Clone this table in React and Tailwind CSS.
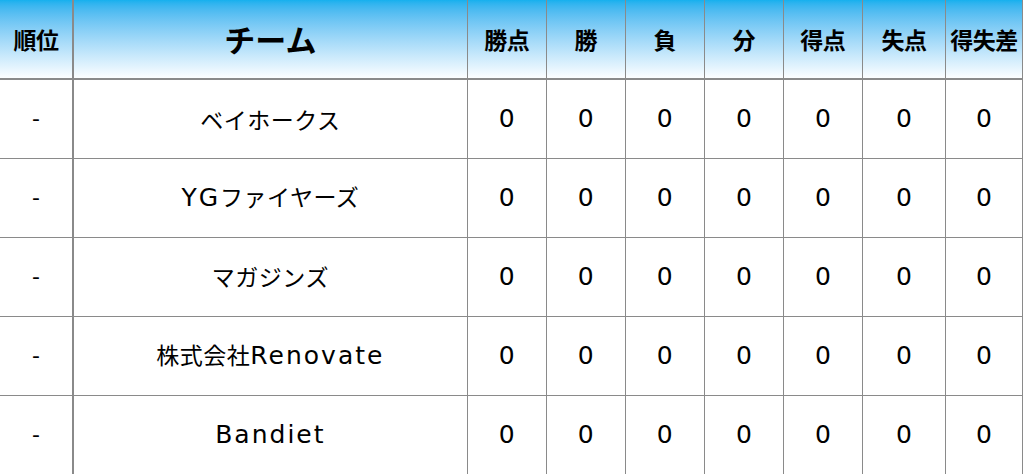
import React from "react";

const teams = [
  [["ベイホークス", "j"]],
  [["YG", "l"], ["ファイヤーズ", "j"]],
  [["マガジンズ", "j"]],
  [["株式会社", "j"], ["Renovate", "l"]],
  [["Bandiet", "l"]],
];
const heads = ["勝点", "勝", "負", "分", "得点", "失点", "得失差"];
const widths = ["w-[79px]", "w-[79px]", "w-[79px]", "w-[79px]", "w-[79px]", "w-[83px]", "w-[77px]"];

const jp = '"Noto Sans CJK JP", sans-serif';
const lat = '"DejaVu Sans", "Noto Sans CJK JP", sans-serif';

export default function App() {
  return (
    <div className="w-[1024px] h-[474px] bg-white overflow-hidden" style={{ fontFamily: jp }}>
      <table className="border-collapse table-fixed w-[1023px] text-black">
        <thead>
          <tr className="h-[79px] bg-gradient-to-b from-[#14b0ee] to-[#ffffff]">
            <th className="w-[73px] border-r-2 border-b-2 border-[#8a8a8a] text-[23px] font-bold p-0 tracking-[-0.5px]">順位</th>
            <th className="w-[394px] border-r border-b-2 border-[#8a8a8a] text-[31px] font-bold p-0">チーム</th>
            {heads.map((h, i) => (
              <th key={h} className={`${widths[i]} border-r border-b-2 border-[#8a8a8a] text-[23px] font-bold p-0 whitespace-nowrap tracking-[-0.5px]`}>{h}</th>
            ))}
          </tr>
        </thead>
        <tbody>
          {teams.map((t, idx) => (
            <tr key={idx} className="h-[79px]">
              <td className="border-r-2 border-b border-[#8a8a8a] text-center text-[22px] p-0" style={{ fontFamily: lat }}>-</td>
              <td className="border-r border-b border-[#8a8a8a] text-center p-0 whitespace-nowrap">
                {t.map(([s, k]) =>
                  k === "j" ? (
                    <span key={s} className="text-[23px] tracking-[0.5px]">{s}</span>
                  ) : (
                    <span key={s} className="text-[25px] tracking-[2px]" style={{ fontFamily: lat }}>{s}</span>
                  )
                )}
              </td>
              {heads.map((h) => (
                <td key={h} className="border-r border-b border-[#8a8a8a] text-center text-[25px] p-0" style={{ fontFamily: lat }}>0</td>
              ))}
            </tr>
          ))}
        </tbody>
      </table>
    </div>
  );
}
